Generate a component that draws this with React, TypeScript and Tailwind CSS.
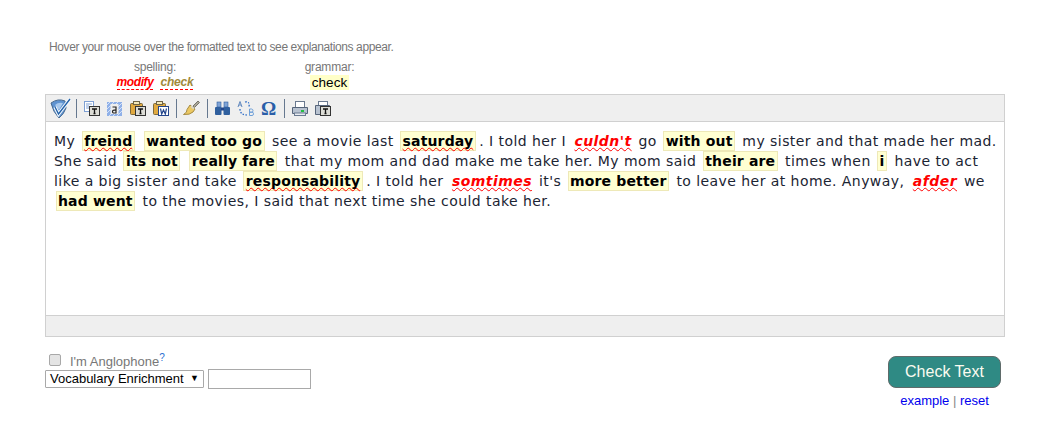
import React from "react";

const Sep = () => <span className="ml-[4px] mr-[3px] h-[19px] w-px shrink-0 bg-[#66788f]" />;

const Doc = () => (
  <>
    <rect x="1.5" y="1.5" width="9" height="10" fill="#fff" stroke="#7ea0d4" />
    <path d="M3 4h6M3 6h3M3 8h3" stroke="#7ea0d4" />
  </>
);
const TBox = () => (
  <g>
    <rect x="6.5" y="6.5" width="10" height="9" fill="#dcdcd6" stroke="#333" />
    <path d="M9 9h5M11.500 9v4.500M10.500 13.500h2" stroke="#111" strokeWidth="1.300" fill="none" />
  </g>
);
const Clip = () => (
  <>
    <rect x="1.5" y="3.5" width="12" height="11" rx="1" fill="#e0a93f" stroke="#7e6a3c" />
    <rect x="4.500" y="1.500" width="6" height="3" fill="#f5e9b8" stroke="#6e6448" />
  </>
);
const Ico = ({ children }: { children: React.ReactNode }) => (
  <svg width="17" height="17" viewBox="0 0 17 17" className="mx-[3px] shrink-0">{children}</svg>
);

function Toolbar() {
  return (
    <div className="flex h-[27px] items-center border-b border-[#d0d0d0] bg-[#efefef] pl-[4px]">
      <svg width="22" height="22" viewBox="0 0 22 22" className="shrink-0">
        <path d="M1 6 Q8 1 15 4 L16 11 Q14 17 9 21 Q3 15 1 6Z" fill="#5f93d0" stroke="#47698f" />
        <path d="M5 8 Q8 5 13 6 L9 13Z" fill="#a9c9ec" />
        <path d="M5 10l3.500 7L20 2" stroke="#f2f7fc" strokeWidth="3.500" fill="none" />
        <path d="M5 10l3.500 7L20 2" stroke="#1f5fa8" strokeWidth="1.300" fill="none" />
      </svg>
      <Sep />
      <Ico><Doc /><TBox /></Ico>
      <Ico>
        <rect x="1" y="2" width="15" height="14" fill="#8fb0e8" />
        <path d="M1 5l3-3M1 9l7-7M1 13l11-11M3 16l13-13M7 16l9-9M11 16l5-5" stroke="#e6eefb" strokeWidth=".8" />
        <rect x="4.500" y="4" width="8" height="10" fill="#eeeeee" />
        <path d="M6.500 7h3.500v6H7.500q-1-.2-1-1.500T8 10.200h2" stroke="#222" strokeWidth="1.200" fill="none" />
      </Ico>
      <Ico><Clip /><TBox /></Ico>
      <Ico>
        <Clip />
        <rect x="6.500" y="6.500" width="10" height="9" fill="#fff" stroke="#24468c" />
        <path d="M8.500 8.500l1.200 5.500 1.800-4 1.800 4 1.200-5.500" stroke="#24468c" strokeWidth="1.200" fill="none" />
      </Ico>
      <Sep />
      <Ico>
        <path d="M10 6l5-5 1.500 1.500-5 5z" fill="#a9a596" stroke="#77756c" />
        <path d="M7 5l5 4-2 3q-3 3-9.500 2.500 4-2 3.500-5z" fill="#ecc862" stroke="#a58a42" />
        <path d="M8.500 5.500l3 2.500-1 1.500-3-2.500z" fill="#d9d4c4" />
      </Ico>
      <Sep />
      <Ico>
        <rect x="1" y="7" width="6.500" height="8" rx="1" fill="#2f5f9e" />
        <rect x="9.500" y="7" width="6.500" height="8" rx="1" fill="#2f5f9e" />
        <rect x="3" y="2" width="4" height="5" fill="#7fa3d6" stroke="#2f5f9e" strokeWidth=".6" />
        <rect x="10" y="2" width="4" height="5" fill="#7fa3d6" stroke="#2f5f9e" strokeWidth=".6" />
        <rect x="7" y="7.500" width="3" height="3" fill="#24468c" />
      </Ico>
      <Ico>
        <path d="M1 7l2-5.500L5 7M2 5h2" stroke="#5e86bd" fill="none" />
        <path d="M8 2Q13 1 12 7M3 9Q3 15 10 15" stroke="#1f62c4" strokeWidth="1.200" strokeDasharray="1.500 1.500" fill="none" />
        <path d="M12.500 9v6.500h2.500q1.500 0 1.500-1.700t-1.500-1.600h-2.500m0 0h2q1.500 0 1.500-1.500T14.500 9h-2" stroke="#6e9fd8" fill="none" />
      </Ico>
      <span className="mx-[3px] w-[17px] shrink-0 text-center font-['Liberation_Serif',serif] text-[19px] font-bold leading-[17px] text-[#2a5ea8]">Ω</span>
      <Sep />
      <Ico>
        <rect x="4.500" y="1.500" width="9" height="6" fill="#fff" stroke="#6b7a90" />
        <path d="M1.500 7.500h15v6h-15z" fill="#b8c2d0" stroke="#55647a" />
        <rect x="3.500" y="13" width="11" height="2.500" fill="#e8ecf2" stroke="#6b7a90" />
        <rect x="10" y="10" width="3" height="2" fill="#22c040" />
      </Ico>
      <Ico>
        <rect x="4.500" y="1.500" width="9" height="5" fill="#fff" stroke="#6b7a90" />
        <path d="M1.500 5.500h14v9h-14z" fill="#b8c2d0" stroke="#55647a" />
        <TBox />
      </Ico>
    </div>
  );
}

const wavy = "underline decoration-wavy decoration-[#ff0000] decoration-1 underline-offset-[1px] [text-decoration-skip-ink:none]";

const G = ({ children, sp, end }: { children: string; sp?: boolean; end?: boolean }) => (
  <span className={`ml-[1.5px] ${end ? "mr-[3.5px]" : "mr-[2.5px]"} inline-block h-[20px] whitespace-nowrap border border-[#eee9b8] bg-[#ffffd2] px-[1.5px] align-top font-bold leading-[18px] tracking-[0.15px] text-black ${sp ? wavy : ""}`}>{children}</span>
);
const S = ({ children }: { children: string }) => (
  <span className={`ml-[3.5px] mr-[2px] font-bold italic tracking-[0.45px] text-[#ff0000] ${wavy}`}>{children}</span>
);

export default function App() {
  return (
    <div className="h-[436px] w-[1037px] bg-white pl-[45px] pt-[40px] font-['Liberation_Sans',Arial,sans-serif] text-[12px] text-[#777]">
      <p className="ml-[4px] h-[14px] leading-[14px] tracking-[-0.4px]">Hover your mouse over the formatted text to see explanations appear.</p>
      <div className="ml-[71px] mt-[6px] flex h-[34px] leading-[14px]">
        <div className="flex w-[78px] flex-col items-center">
          <span className="tracking-[-0.2px]">spelling:</span>
          <div className="mt-[1px] flex gap-[7px] font-bold italic">
            <span className="border-b border-dashed border-[#ff0000] tracking-[-0.4px] text-[#ff0000]">modify</span>
            <span className="border-b border-dashed border-[#ff0000] tracking-[-0.2px] text-[#a08a3a]">check</span>
          </div>
        </div>
        <div className="ml-[118px] flex w-[35px] flex-col items-center">
          <span className="tracking-[-0.2px]">grammar:</span>
          <span className="mt-[0.5px] bg-[#ffffc8] px-[2px] text-[13.5px] leading-[15px] text-black">check</span>
        </div>
      </div>
      <div className="flex h-[243px] w-[960px] flex-col border border-[#d0d0d0]">
        <Toolbar />
        <div className="flex-1 bg-white pl-[8px] pr-[4px] pt-[9px] font-['DejaVu_Sans',Verdana,sans-serif] text-[14px] leading-[20px] tracking-[0.44px] text-[#1b2433]">
          My <G sp>freind</G> <G>wanted too go</G> see a movie last <G sp end>saturday</G>. I told her I <S>culdn't</S> go <G>with out</G> my sister and that made her mad. She said <G>its not</G> <G>really fare</G> that my mom and dad make me take her. My mom said <G>their are</G> times when <G>i</G> have to act like a big sister and take <G sp end>responsability</G>. I told her <S>somtimes</S> it's <G>more better</G> to leave her at home. Anyway, <S>afder</S> we <G>had went</G> to the movies, I said that next time she could take her.
        </div>
        <div className="h-[21px] border-t border-[#d0d0d0] bg-[#efefef]" />
      </div>
      <div className="mt-[15px] flex w-[956px] items-start justify-between">
        <div>
          <label className="ml-[4px] flex h-[15px] items-center text-[13px] leading-[14px]">
            <input type="checkbox" className="m-0 h-[12px] w-[12px] appearance-none rounded-[2px] border border-[#a8a8a8] bg-[#e4e4e4]" />
            <span className="ml-[9px] mt-[5px]">I'm Anglophone<sup className="text-[10px] text-[#2a6fd0]">?</sup></span>
          </label>
          <div className="mt-[2px] flex items-center gap-[4px]">
            <div className="flex h-[18px] w-[159px] items-center justify-between rounded-[1px] border border-[#a9a9a9] pl-[4px] pr-[4px] text-[13px] text-black">
              <span>Vocabulary Enrichment</span>
              <span className="text-[9px]">▼</span>
            </div>
            <input className="h-[20px] w-[103px] border border-[#a9a9a9] bg-white" />
          </div>
        </div>
        <div className="mt-[4px] flex flex-col items-center">
          <button className="h-[32px] w-[113px] rounded-[8px] border border-[#5f6b6a] bg-[#2f8a84] text-[16px] text-[#fbfbf0]">Check Text</button>
          <div className="mt-[6px] text-[13px] leading-[14px] text-[#888]">
            <a className="text-[#0000ee]">example</a> | <a className="text-[#0000ee]">reset</a>
          </div>
        </div>
      </div>
    </div>
  );
}
